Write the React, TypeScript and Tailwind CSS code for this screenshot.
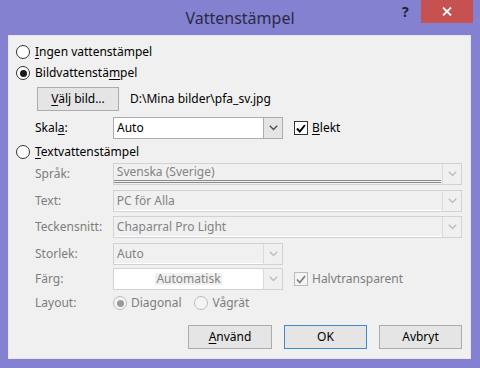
import React from 'react';

function Radio({ checked, disabled }: { checked?: boolean; disabled?: boolean }) {
  return (
    <span
      className={`w-[14px] h-[14px] rounded-full border flex items-center justify-center shrink-0 ${
        disabled ? 'border-[#bcbcbc] bg-[#f4f4f4]' : 'border-[#333333] bg-white'
      }`}
    >
      {checked && (
        <span className={`w-[7px] h-[7px] rounded-full ${disabled ? 'bg-[#9a9a9a]' : 'bg-[#1a1a1a]'}`} />
      )}
    </span>
  );
}

function Check({ disabled }: { disabled?: boolean }) {
  return (
    <span
      className={`w-[14px] h-[14px] border flex items-center justify-center shrink-0 ${
        disabled ? 'border-[#bcbcbc] bg-[#f4f4f4]' : 'border-[#333333] bg-white'
      }`}
    >
      <svg width="10" height="9" viewBox="0 0 10 9">
        <path
          d="M1 4.5 L3.8 7.5 L9 1"
          fill="none"
          stroke={disabled ? '#7a7a7a' : '#000'}
          strokeWidth={disabled ? 1.6 : 2}
        />
      </svg>
    </span>
  );
}

function Chevron({ disabled }: { disabled?: boolean }) {
  return (
    <svg width="9" height="6" viewBox="0 0 9 6">
      <path d="M0.8 0.8 L4.5 4.5 L8.2 0.8" fill="none" stroke={disabled ? '#bdbdbd' : '#4d4d4d'} strokeWidth="1.4" />
    </svg>
  );
}

function Combo({
  value,
  width,
  disabled,
  white,
  center,
  doubleLine,
}: {
  value: string;
  width: string;
  disabled?: boolean;
  white?: boolean;
  center?: boolean;
  doubleLine?: boolean;
}) {
  return (
    <div
      className={`${width} h-[22px] border flex ${
        disabled ? 'border-[#d2d2d2]' : 'border-[#acacac]'
      } ${white ? 'bg-white' : disabled ? 'bg-[#f0f0f0]' : 'bg-white'}`}
    >
      <div
        className={`flex-1 flex items-center px-[3px] ${center ? 'justify-center' : ''} ${
          disabled ? 'text-[#838383]' : 'text-black'
        } ${doubleLine ? 'border-b-[3px] border-double border-[#8a8a8a] mb-[1px] mr-[1px]' : ''} ${
          disabled && !white && !doubleLine ? 'border-b border-white' : ''
        }`}
      >
        <span className={center ? 'bg-[#f0f0f0] px-[1px]' : ''}>{value}</span>
      </div>
      <div
        className={`w-[19px] flex items-center justify-center border-l ${
          disabled ? 'border-[#dadada] bg-[#f0f0f0]' : 'border-[#acacac] bg-[#e5e5e5]'
        }`}
      >
        <Chevron disabled={disabled} />
      </div>
    </div>
  );
}

function Button({ children, primary }: { children: React.ReactNode; primary?: boolean }) {
  return (
    <div
      className={`h-[24px] flex items-center justify-center border bg-[#e5e5e5] text-black ${
        primary ? 'border-[#3c8ad0]' : 'border-[#acacac]'
      }`}
    >
      {children}
    </div>
  );
}

export default function App() {
  return (
    <div className="w-[480px] h-[368px] bg-[#8581d1] flex flex-col font-['Noto_Sans',sans-serif] text-[12px] leading-none select-none">
      {/* Title bar */}
      <div className="relative h-[35px] flex items-center justify-center">
        <span className="text-[16px] text-[#2a2a45] mt-[1px]">Vattenstämpel</span>
        <span className="absolute left-[402px] top-[5px] text-[14px] font-bold text-[#1f1f33]">?</span>
        <div className="absolute right-[7px] top-0 w-[52px] h-[23px] bg-[#c75050] flex items-center justify-center">
          <svg width="10" height="9" viewBox="0 0 10 9">
            <path d="M1 0.5 L9 8.5 M9 0.5 L1 8.5" stroke="#fff" strokeWidth="1.8" />
          </svg>
        </div>
      </div>

      {/* Client area */}
      <div className="ml-[8px] w-[463px] h-[324px] bg-[#f0f0f0] border border-[#e6e6f3] flex flex-col pl-[7px] pr-[8px] pt-[8px]">
        <div className="h-[16px] flex items-center gap-[5px]">
          <Radio />
          <span>
            <span className="underline underline-offset-2">I</span>ngen vattenstämpel
          </span>
        </div>
        <div className="mt-[5px] h-[16px] flex items-center gap-[5px]">
          <Radio checked />
          <span>
            Bildvattenstä<span className="underline underline-offset-2">m</span>pel
          </span>
        </div>
        <div className="mt-[6px] h-[24px] flex items-center ml-[21px]">
          <div className="w-[82px]">
            <Button>
              <span>
                <span className="underline underline-offset-2">V</span>älj bild...
              </span>
            </Button>
          </div>
          <span className="ml-[11px]">D:\Mina bilder\pfa_sv.jpg</span>
        </div>
        <div className="mt-[6px] h-[22px] flex items-center ml-[19px]">
          <span className="w-[78px]">
            Skal<span className="underline underline-offset-2">a</span>:
          </span>
          <Combo value="Auto" width="w-[170px]" />
          <span className="ml-[11px] flex items-center gap-[4px]">
            <Check />
            <span>
              <span className="underline underline-offset-2">B</span>lekt
            </span>
          </span>
        </div>
        <div className="mt-[5px] h-[16px] flex items-center gap-[5px]">
          <Radio />
          <span>
            <span className="underline underline-offset-2">T</span>extvattenstämpel
          </span>
        </div>
        <div className="mt-[3px] h-[22px] flex items-center ml-[19px] text-[#7d7d7d]">
          <span className="w-[78px]">Språk:</span>
          <Combo value="Svenska (Sverige)" width="w-[350px]" disabled doubleLine />
        </div>
        <div className="mt-[5px] h-[22px] flex items-center ml-[19px] text-[#7d7d7d]">
          <span className="w-[78px]">Text:</span>
          <Combo value="PC för Alla" width="w-[350px]" disabled />
        </div>
        <div className="mt-[4px] h-[22px] flex items-center ml-[19px] text-[#7d7d7d]">
          <span className="w-[78px]">Teckensnitt:</span>
          <Combo value="Chaparral Pro Light" width="w-[350px]" disabled />
        </div>
        <div className="mt-[5px] h-[22px] flex items-center ml-[19px] text-[#7d7d7d]">
          <span className="w-[78px]">Storlek:</span>
          <Combo value="Auto" width="w-[170px]" disabled />
        </div>
        <div className="mt-[3px] h-[22px] flex items-center ml-[19px] text-[#7d7d7d]">
          <span className="w-[78px]">Färg:</span>
          <Combo value="Automatisk" width="w-[170px]" disabled white center />
          <span className="ml-[11px] flex items-center gap-[4px]">
            <Check disabled />
            <span>Halvtransparent</span>
          </span>
        </div>
        <div className="mt-[5px] h-[16px] flex items-center ml-[19px] text-[#7d7d7d]">
          <span className="w-[78px]">Layout:</span>
          <span className="flex items-center gap-[4px]">
            <Radio checked disabled />
            <span>Diagonal</span>
          </span>
          <span className="ml-[13px] flex items-center gap-[4px]">
            <Radio disabled />
            <span>Vågrät</span>
          </span>
        </div>
        <div className="mt-[14px] flex justify-end gap-[12px]">
          <div className="w-[84px]">
            <Button>
              <span>
                <span className="underline underline-offset-2">A</span>nvänd
              </span>
            </Button>
          </div>
          <div className="w-[83px]">
            <Button primary>OK</Button>
          </div>
          <div className="w-[83px]">
            <Button>Avbryt</Button>
          </div>
        </div>
      </div>
    </div>
  );
}
